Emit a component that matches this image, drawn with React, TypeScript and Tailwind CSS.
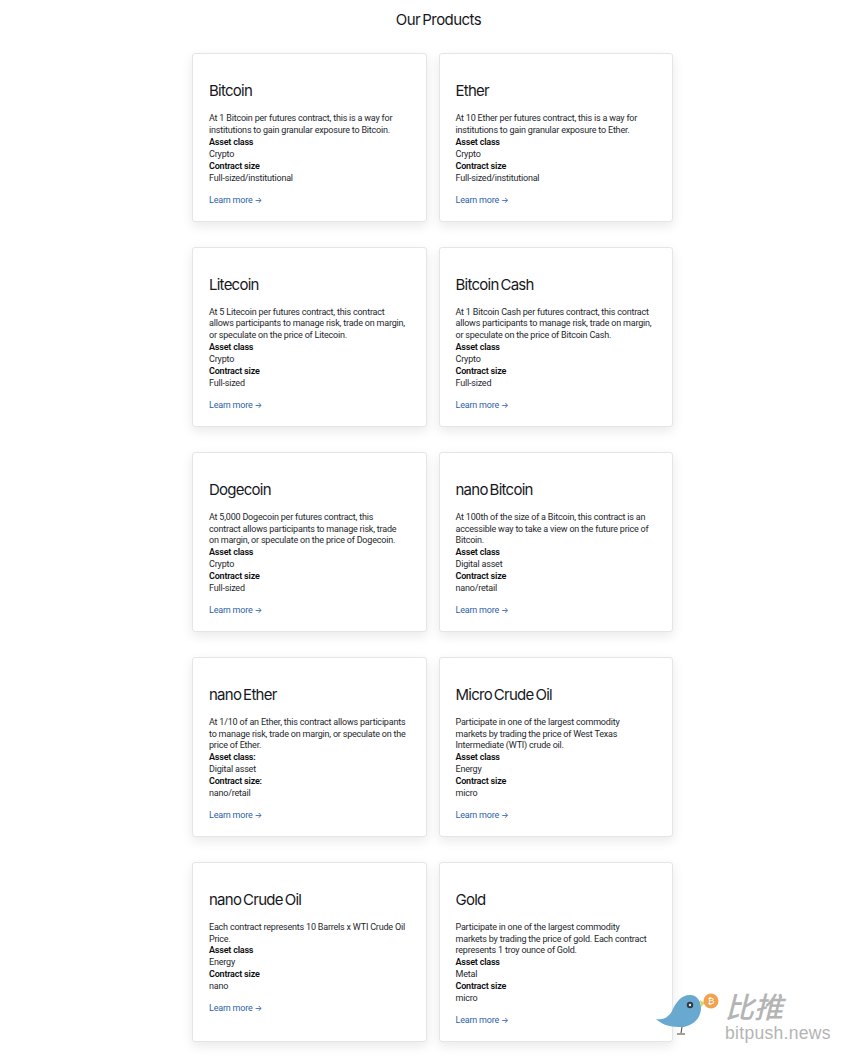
const products = [
  { name: "Bitcoin", desc: "At 1 Bitcoin per futures contract, this is a way for institutions to gain granular exposure to Bitcoin.", asset: "Crypto", size: "Full-sized/institutional" },
  { name: "Ether", desc: "At 10 Ether per futures contract, this is a way for institutions to gain granular exposure to Ether.", asset: "Crypto", size: "Full-sized/institutional" },
  { name: "Litecoin", desc: "At 5 Litecoin per futures contract, this contract allows participants to manage risk, trade on margin, or speculate on the price of Litecoin.", asset: "Crypto", size: "Full-sized" },
  { name: "Bitcoin Cash", desc: "At 1 Bitcoin Cash per futures contract, this contract allows participants to manage risk, trade on margin, or speculate on the price of Bitcoin Cash.", asset: "Crypto", size: "Full-sized" },
  { name: "Dogecoin", desc: "At 5,000 Dogecoin per futures contract, this\ncontract allows participants to manage risk, trade\non margin, or speculate on the price of Dogecoin.", asset: "Crypto", size: "Full-sized" },
  { name: "nano Bitcoin", desc: "At 100th of the size of a Bitcoin, this contract is an accessible way to take a view on the future price of Bitcoin.", asset: "Digital asset", size: "nano/retail" },
  { name: "nano Ether", desc: "At 1/10 of an Ether, this contract allows participants to manage risk, trade on margin, or speculate on the price of Ether.", asset: "Digital asset", size: "nano/retail", colon: true },
  { name: "Micro Crude Oil", desc: "Participate in one of the largest commodity\nmarkets by trading the price of West Texas\nIntermediate (WTI) crude oil.", asset: "Energy", size: "micro" },
  { name: "nano Crude Oil", desc: "Each contract represents 10 Barrels x WTI Crude Oil Price.", asset: "Energy", size: "nano" },
  { name: "Gold", desc: "Participate in one of the largest commodity\nmarkets by trading the price of gold. Each contract\nrepresents 1 troy ounce of Gold.", asset: "Metal", size: "micro" },
];

const Watermark = () => (
  <div className="absolute left-[654px] top-[990px] flex items-start">
    <svg width="66" height="48" viewBox="0 0 66 48">
      <path d="M2 29 C9 30 14 28 18 21 C22 11 29 4 37 5 C44 6 47 12 47 18 C47 30 36 38 25 37 C15 37 7 34 2 29 Z" fill="#6aa9cf" />
      <path d="M46 10 L51 13 L47 17 Z" fill="#d9d56a" />
      <circle cx="36" cy="15" r="3.2" fill="#2f3a44" />
      <circle cx="36" cy="15" r="1.2" fill="#e8eef2" />
      <path d="M28 37 L27 43 M23 44 L31 44" stroke="#4a3f3a" strokeWidth="1" fill="none" />
      <circle cx="57" cy="11" r="7.5" fill="#f0a24e" />
      <text x="57" y="14" textAnchor="middle" fontSize="9" fill="#fff" fontFamily="Liberation Sans">₿</text>
    </svg>
    <div className="flex flex-col text-[#b4b4b4] font-['Liberation_Sans',sans-serif] ml-[5px]">
      <span className="text-[29px] leading-[30px] italic font-['Noto_Sans_CJK_SC',sans-serif] font-medium">比推</span>
      <span className="text-[17.5px] leading-[20px] tracking-[0.3px] mt-[3px]">bitpush.news</span>
    </div>
  </div>
);

export default function App() {
  return (
    <div className="relative w-[852px] h-[1061px] overflow-hidden bg-white font-['Inter',sans-serif] text-[#16181c]">
      <h1 className="pl-[25px] pt-[11px] text-center text-[15px] leading-[18px] tracking-[-0.55px] [word-spacing:-1.5px]">Our Products</h1>
      <div className="mt-[24.45px] ml-[192px] grid w-[481px] grid-cols-2 gap-x-[12px] gap-y-[24.6px]">
        {products.map((p) => (
          <div key={p.name} className="flex flex-col rounded-[3px] border border-[#e3e5e8] bg-white px-[16px] pt-[27px] pb-[14.2px] shadow-[0_4px_12px_rgba(0,0,0,0.09)]">
            <h2 className="text-[15px] leading-[20px] tracking-[-0.75px] [word-spacing:-1.5px]">{p.name}</h2>
            <div className="mt-[12px] font-['Roboto',sans-serif] text-[9px] leading-[11.9px] tracking-[-0.2px] text-[#24272c]">
              <p className="whitespace-pre-line">{p.desc}</p>
              <p className="font-semibold text-[#0a0b0d]">Asset class{p.colon ? ":" : ""}</p>
              <p>{p.asset}</p>
              <p className="font-semibold text-[#0a0b0d]">Contract size{p.colon ? ":" : ""}</p>
              <p>{p.size}</p>
            </div>
            <a className="pt-[10px] font-['Roboto',sans-serif] text-[9px] leading-[11.9px] tracking-[-0.2px] text-[#2d5fa8]">
              Learn more <span className="font-['Inter',sans-serif] text-[8px]">→</span>
            </a>
          </div>
        ))}
      </div>
      <Watermark />
    </div>
  );
}
